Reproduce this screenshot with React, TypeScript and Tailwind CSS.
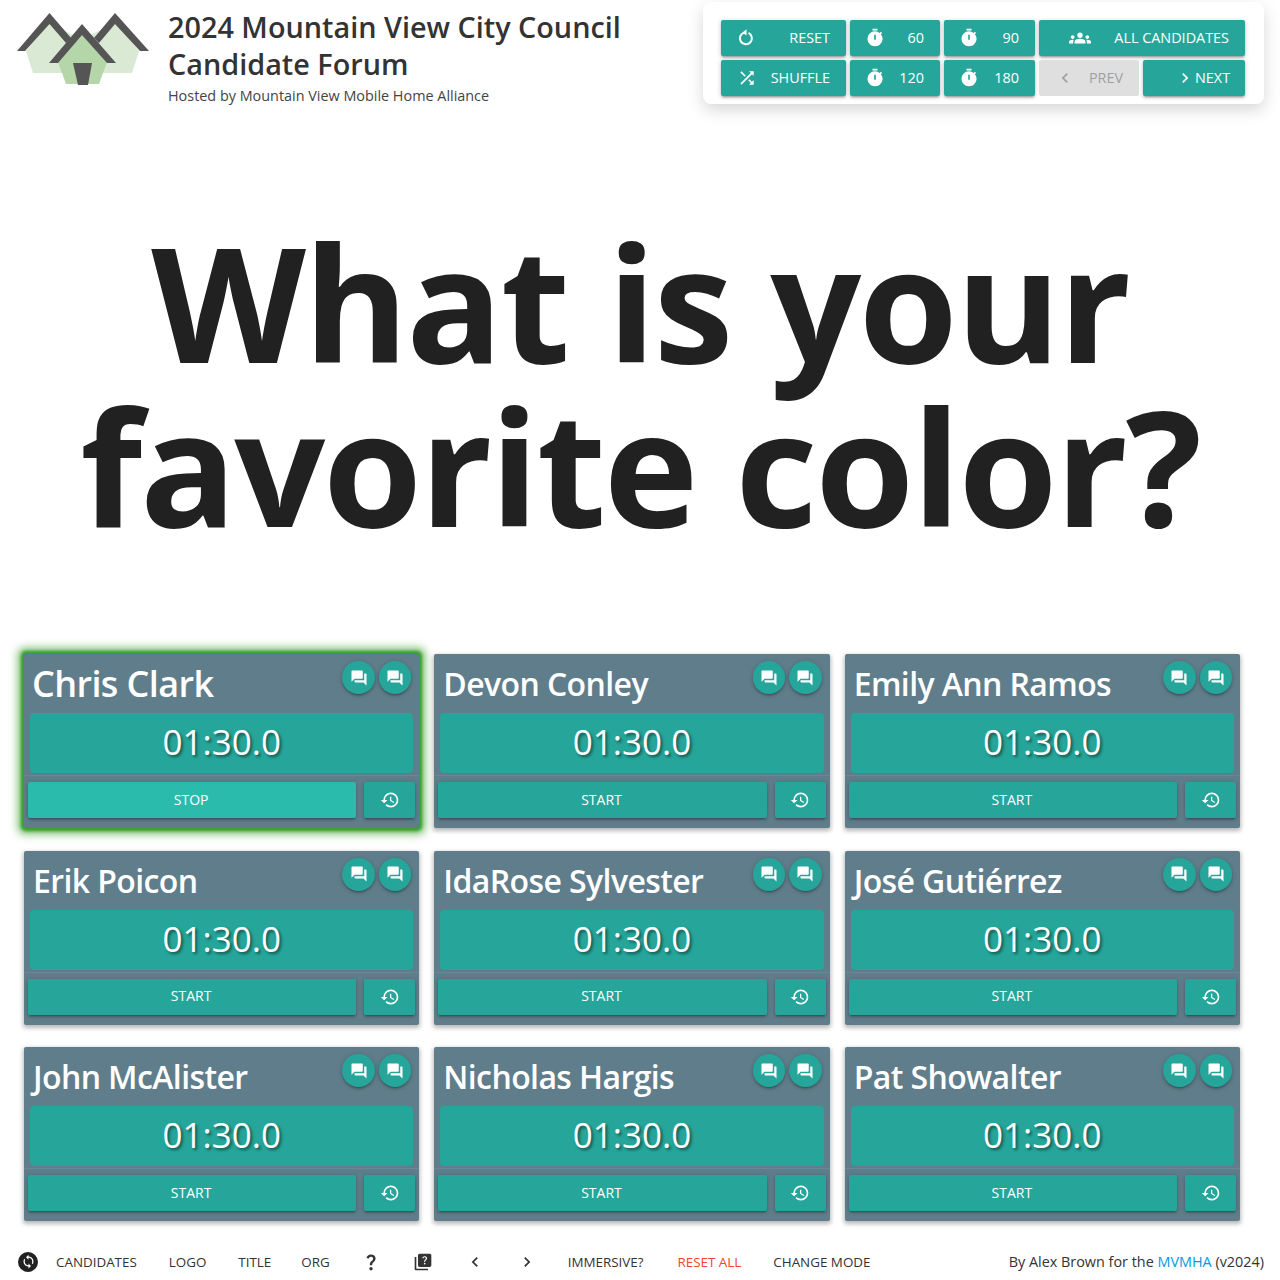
import React from "react";
import { MdQuestionAnswer, MdRestore, MdTimer, MdShuffle, MdGroups, MdChevronLeft, MdChevronRight, MdSync, MdQuestionMark, MdQuiz } from "react-icons/md";

const names = ["Chris Clark","Devon Conley","Emily Ann Ramos","Erik Poicon","IdaRose Sylvester","José Gutiérrez","John McAlister","Nicholas Hargis","Pat Showalter"];

function ResetIcon() {
  return (
    <svg width="18" height="18" viewBox="0 0 18 18" fill="none" className="-mt-[2px]">
      <path d="M7 4.6 A6 6 0 1 0 11.5 4.9" stroke="white" strokeWidth="2" />
      <polygon points="9.5,1.2 9.5,7.6 5.5,4.4" fill="white" />
    </svg>
  );
}

function Timer() {
  return <span className="-ml-px"><MdTimer size={20} /></span>;
}

function Tool({ w, icon, label, disabled }: { w: string; icon: React.ReactNode; label: string; disabled?: boolean }) {
  return (
    <div className={`${w} h-9 rounded-[2px] flex items-center justify-between pl-4 pr-4 text-[14.4px] ${disabled ? "bg-[#dfdfdf] text-[#9f9f9f]" : "bg-[#26a69a] text-white shadow-[0_2px_2px_0_rgba(0,0,0,0.14),0_3px_1px_-2px_rgba(0,0,0,0.12),0_1px_5px_0_rgba(0,0,0,0.2)]"}`}>
      {icon}
      <span>{label}</span>
    </div>
  );
}

function Card({ name, active }: { name: string; active?: boolean }) {
  const shadow = "shadow-[0_2px_2px_0_rgba(0,0,0,0.14),0_3px_1px_-2px_rgba(0,0,0,0.12),0_1px_5px_0_rgba(0,0,0,0.2)]";
  return (
    <div className={`relative h-[174px] rounded-[2px] bg-[#607d8b] flex flex-col ${active ? "z-10 shadow-[0_0_3px_3px_#38a02c,0_0_8px_6px_rgba(62,160,50,0.7)]" : "shadow-[0_2px_4px_1px_rgba(0,0,0,0.28)]"}`}>
      <div className={`h-[59px] flex justify-between pr-2 pt-[7px] ${active ? "pl-[8px]" : "pl-[9px]"}`}>
        <div className={`leading-[46px] text-white font-semibold ${active ? "text-[36px] tracking-[-0.6px]" : "text-[32px] tracking-[-0.6px]"}`}>{name}</div>
        <div className="flex gap-1 pl-[1px]">
          {[0, 1].map((i) => (
            <div key={i} className={`w-[32.5px] h-[33px] rounded-full bg-[#26a69a] text-white flex items-center justify-center ${shadow}`}>
              <MdQuestionAnswer size={18} />
            </div>
          ))}
        </div>
      </div>
      <div className="h-[60px] mx-1.5 rounded-[4px] bg-[#26a69a] flex items-center justify-center text-[35px] pb-[2px] text-white [text-shadow:2px_2px_3px_rgba(0,0,0,0.5)]">01:30.0</div>
      <div className="mt-[2px] border-t border-[#6b8694]" />
      <div className="flex gap-2 px-1 pt-[6px]">
        <div className={`flex-1 h-9 rounded-[2px] flex items-center justify-center text-[14px] pb-[2px] pr-[2px] text-white ${active ? "bg-[#2bbbad]" : "bg-[#26a69a]"} ${shadow}`}>{active ? "STOP" : "START"}</div>
        <div className={`w-[51px] h-9 rounded-[2px] bg-[#26a69a] text-white flex items-center justify-center ${shadow}`}>
          <MdRestore size={20} />
        </div>
      </div>
    </div>
  );
}

function Logo() {
  return (
    <svg width="134" height="76" viewBox="16 12 134 76" className="shrink-0">
      <polygon points="49,22 26,51 33,73 132,73 139,51 115,22 82,40" fill="#d9e9d3" />
      <polygon points="82,32 58,62 66,84 99,84 107,62" fill="#b5d6a9" />
      <polygon points="49.5,13 71,38 66,43 49.5,24 25,51 17,51" fill="#555" />
      <polygon points="115,13 149,51 140,51 115,24 99,43 94,38" fill="#555" />
      <polygon points="82,24 116,63 107,63 82,35 58,63 49,63" fill="#555" />
      <polygon points="73,63 92,63 88,85 78,85" fill="#555" />
    </svg>
  );
}

function Slot({ children, className = "" }: { children: React.ReactNode; className?: string }) {
  return <div className={`w-5 h-5 flex items-center justify-center ${className}`}>{children}</div>;
}

export default function App() {
  return (
    <div className="w-[1280px] h-[1280px] overflow-hidden bg-white flex flex-col text-[#212121] font-['Open_Sans',sans-serif]">
      <header className="h-[120px] flex justify-between pl-4 pr-4 pt-[2px]">
        <div className="flex">
          <div className="pt-[10px]"><Logo /></div>
          <div className="pl-[18px] pt-[6px]">
            <div className="text-[28.8px] leading-[37px] font-semibold text-[#333]">2024 Mountain View City Council<br />Candidate Forum</div>
            <div className="text-[14.4px] leading-[20px] mt-[4px] text-[#444]">Hosted by Mountain View Mobile Home Alliance</div>
          </div>
        </div>
        <div className="w-[561px] h-[102px] rounded-[8px] bg-white shadow-[0_6px_16px_rgba(0,0,0,0.16)] px-[18px] pt-[18px] flex flex-col gap-1">
          <div className="flex gap-1">
            <Tool w="w-[125px]" icon={<ResetIcon />} label="RESET" />
            <Tool w="w-[90px]" icon={<Timer />} label="60" />
            <Tool w="w-[91px]" icon={<Timer />} label="90" />
            <Tool w="w-[206px]" icon={<span className="ml-[14px]"><MdGroups size={22} /></span>} label="ALL CANDIDATES" />
          </div>
          <div className="flex gap-1">
            <Tool w="w-[125px]" icon={<MdShuffle size={20} />} label="SHUFFLE" />
            <Tool w="w-[90px]" icon={<Timer />} label="120" />
            <Tool w="w-[91px]" icon={<Timer />} label="180" />
            <Tool w="w-[100px]" icon={<MdChevronLeft size={20} />} label="PREV" disabled />
            <Tool w="w-[102px]" icon={<span className="ml-4"><MdChevronRight size={20} /></span>} label="NEXT" />
          </div>
        </div>
      </header>
      <main className="h-[534.3px] flex items-center justify-center text-center">
        <div className="text-[160px] leading-[164px] font-bold tracking-[-2.3px] text-[#212121] pb-[8px]">What is your<br />favorite color?</div>
      </main>
      <section className="pl-6 pr-10 grid grid-cols-3 gap-x-[15px] gap-y-[22.5px]">
        {names.map((n, i) => <Card key={n} name={n} active={i === 0} />)}
      </section>
      <footer className="flex-1 flex items-center justify-between pl-[18px] pr-4 text-[13.4px] pt-[22px]">
        <div className="flex items-center gap-8 text-[#333]">
          <div className="w-5 h-5 rounded-full bg-[#212121] text-white flex items-center justify-center -mr-[14px]"><MdSync size={15} /></div>
          <span>CANDIDATES</span><span>LOGO</span><span>TITLE</span><span className="-ml-[2px]">ORG</span>
          <Slot className="-ml-[1px]"><MdQuestionMark size={22} /></Slot>
          <Slot><MdQuiz size={20} /></Slot>
          <Slot><MdChevronLeft size={20} /></Slot>
          <Slot><MdChevronRight size={20} /></Slot>
          <span className="-ml-[1px]">IMMERSIVE?</span>
          <span className="text-[#f44336] ml-[2px]">RESET ALL</span>
          <span>CHANGE MODE</span>
        </div>
        <div className="text-[14.4px] text-[#333]">By Alex Brown for the <span className="text-[#039be5]">MVMHA</span> (v2024)</div>
      </footer>
    </div>
  );
}
